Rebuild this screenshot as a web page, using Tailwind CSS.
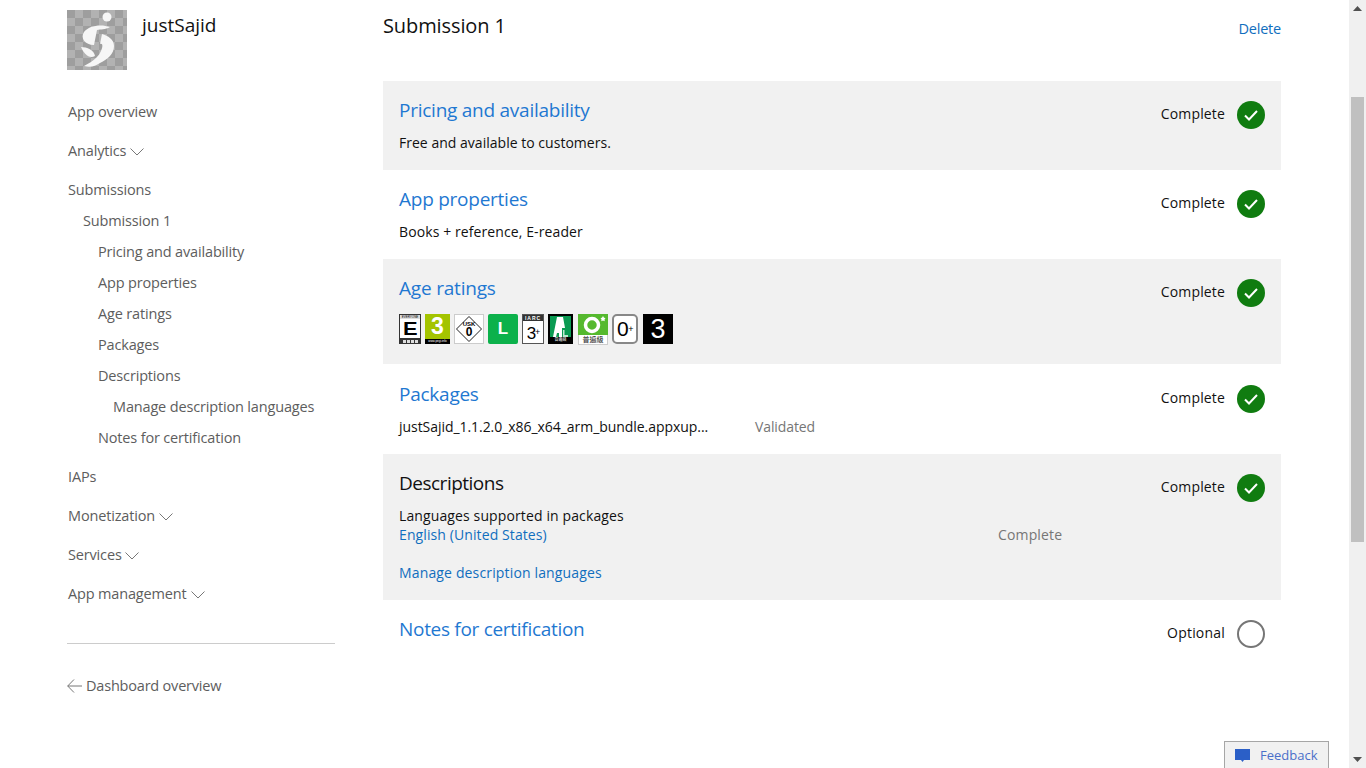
<!DOCTYPE html>
<html lang="en">
<head>
  <meta charset="UTF-8" />
  <title>Submission 1</title>
  <script src="https://cdn.jsdelivr.net/npm/@tailwindcss/browser@4"></script>
</head>
<body class="bg-white text-[#111] font-['Open_Sans',sans-serif] text-[14px] overflow-hidden">
<div class="relative h-[768px] w-[1366px] overflow-hidden">

  <div class="flex w-[1349px]">
    <!-- Sidebar -->
    <aside class="ml-[67px] w-[268px] shrink-0 text-[#5d5d5d]">
      <div class="flex h-[70px] mt-[10px]">
        <svg width="60" height="60" viewBox="0 0 60 60" class="shrink-0">
          <defs>
            <pattern id="chk" width="16" height="16" patternUnits="userSpaceOnUse">
              <rect width="16" height="16" fill="#b2b2b2"/>
              <rect width="8" height="8" fill="#9e9e9e"/>
              <rect x="8" y="8" width="8" height="8" fill="#9e9e9e"/>
            </pattern>
          </defs>
          <rect width="60" height="60" fill="url(#chk)"/>
          <circle cx="40" cy="7" r="4.5" fill="#f6f6f6"/>
          <path d="M43 17C35 14 22 15 17 22c-4 6 1 13 10 13l3-15c4-1 8 0 13-3z" fill="#f6f6f6"/>
          <path d="M35 24l-2 10c3-1 3 3 1 7-2 5-6 8-10 11l-7 4c7 2 11 0 16-3 8-4 14-9 14-17 0-7-6-10-12-12z" fill="#f6f6f6"/>
          <path d="M14 37c3 7 8 12 14 9-1-6-8-9-14-9z" fill="#f6f6f6"/>
        </svg>
        <div class="ml-[15px] text-[19px] leading-[30px] text-[#111]">justSajid</div>
      </div>

      <nav class="mt-[21px] pl-[1px] text-[14.5px] leading-[22px] tracking-[-0.16px]">
        <a class="block">App overview</a>
        <a class="flex items-center mt-[17px]">Analytics
          <svg width="14" height="8" viewBox="0 0 14 8" class="ml-[4px] mt-[2px]"><path d="M.5.5 7 7l6.5-6.5" fill="none" stroke="#777" /></svg>
        </a>
        <a class="block mt-[17px]">Submissions</a>
        <a class="block mt-[9px] ml-[15px]">Submission 1</a>
        <a class="block mt-[9px] ml-[30px]">Pricing and availability</a>
        <a class="block mt-[9px] ml-[30px]">App properties</a>
        <a class="block mt-[9px] ml-[30px]">Age ratings</a>
        <a class="block mt-[9px] ml-[30px]">Packages</a>
        <a class="block mt-[9px] ml-[30px]">Descriptions</a>
        <a class="block mt-[9px] ml-[45px]">Manage description languages</a>
        <a class="block mt-[9px] ml-[30px]">Notes for certification</a>
        <a class="block mt-[17px]">IAPs</a>
        <a class="flex items-center mt-[17px]">Monetization
          <svg width="14" height="8" viewBox="0 0 14 8" class="ml-[4px] mt-[2px]"><path d="M.5.5 7 7l6.5-6.5" fill="none" stroke="#777" /></svg>
        </a>
        <a class="flex items-center mt-[17px]">Services
          <svg width="14" height="8" viewBox="0 0 14 8" class="ml-[3px] mt-[2px]"><path d="M.5.5 7 7l6.5-6.5" fill="none" stroke="#777" /></svg>
        </a>
        <a class="flex items-center mt-[17px]">App management
          <svg width="14" height="8" viewBox="0 0 14 8" class="ml-[4px] mt-[2px]"><path d="M.5.5 7 7l6.5-6.5" fill="none" stroke="#777" /></svg>
        </a>
      </nav>

      <div class="mt-[38px] border-t border-[#ccc]"></div>
      <a class="flex items-center mt-[31px] leading-[22px] text-[14.5px] tracking-[-0.2px]">
        <svg width="15" height="14" viewBox="0 0 15 14" class="mr-[4px]"><path d="M7 .5.7 7 7 13.5M.7 7H15" fill="none" stroke="#777"/></svg>
        Dashboard overview
      </a>
    </aside>

    <!-- Main -->
    <main class="ml-[48px] w-[898px] shrink-0">
      <div class="flex justify-between h-[81px]">
        <h1 class="text-[20px] tracking-[-0.1px] leading-[30px] mt-[11px]">Submission 1</h1>
        <a class="text-[#106ebe] text-[14.5px] tracking-[-0.2px] leading-[22px] mt-[18px]">Delete</a>
      </div>

      <section class="bg-[#f1f1f1] h-[89px] px-4 flex justify-between">
        <div>
          <h2 class="text-[#1f78d1] text-[19px] tracking-[-0.25px] leading-[28px] mt-[15px]">Pricing and availability</h2>
          <p class="mt-[8px] leading-[22px] tracking-[0.02px]">Free and available to customers.</p>
        </div>
        <div class="flex items-start h-[28px] mt-[20px]">
          <span class="leading-[26px] tracking-[0.15px]">Complete</span>
          <svg width="28" height="28" viewBox="0 0 28 28" class="ml-3"><circle cx="14" cy="14" r="14" fill="#107c10"/><path d="M8 14.5l4 4 8-8.5" fill="none" stroke="#fff" stroke-width="2"/></svg>
        </div>
      </section>

      <section class="h-[89px] px-4 flex justify-between">
        <div>
          <h2 class="text-[#1f78d1] text-[19px] tracking-[-0.25px] leading-[28px] mt-[15px]">App properties</h2>
          <p class="mt-[8px] leading-[22px] tracking-[0.1px]">Books + reference, E-reader</p>
        </div>
        <div class="flex items-start h-[28px] mt-[20px]">
          <span class="leading-[26px] tracking-[0.15px]">Complete</span>
          <svg width="28" height="28" viewBox="0 0 28 28" class="ml-3"><circle cx="14" cy="14" r="14" fill="#107c10"/><path d="M8 14.5l4 4 8-8.5" fill="none" stroke="#fff" stroke-width="2"/></svg>
        </div>
      </section>

      <section class="bg-[#f1f1f1] h-[105px] px-4 flex justify-between">
        <div>
          <h2 class="text-[#1f78d1] text-[19px] tracking-[-0.2px] leading-[28px] mt-[15px]">Age ratings</h2>
          <div class="flex mt-[12px] gap-[4px] h-[30px] font-['Liberation_Sans',sans-serif]">
            <!-- ESRB -->
            <div class="w-[22px] h-[30px] bg-[#333] p-[1px] flex flex-col items-center">
              <div class="w-full h-[4px] bg-[#ddd] text-[3px] leading-[4px] text-black text-center">EVERYONE</div>
              <div class="w-full h-[19px] bg-white text-black font-black text-[19px] leading-[19px] text-center"><span class="inline-block scale-x-[1.15]">E</span></div>
              <div class="w-full flex justify-center gap-[1px] mt-[2px]"><span class="w-[3px] h-[3px] bg-[#ddd]"></span><span class="w-[3px] h-[3px] bg-[#ddd]"></span><span class="w-[3px] h-[3px] bg-[#ddd]"></span><span class="w-[3px] h-[3px] bg-[#ddd]"></span></div>
            </div>
            <!-- PEGI -->
            <div class="w-[25px] h-[30px] bg-black flex flex-col items-center"><div class="w-full h-[25px] bg-[#a4c400] text-white font-bold text-[23px] leading-[25px] text-center">3</div><div class="text-[3px] leading-[5px] text-white">www.pegi.info</div></div>
            <!-- USK -->
            <div class="w-[30px] h-[30px] bg-white border border-[#ccc] flex items-center justify-center relative">
              <svg width="28" height="28" viewBox="0 0 28 28" class="absolute"><path d="M14 1.5 26.500 14 14 26.500 1.500 14z" fill="#fff" stroke="#222"/></svg>
              <div class="relative text-center text-black font-bold"><div class="text-[6px] leading-[6px]">USK</div><div class="text-[12px] leading-[11px]">0</div></div>
            </div>
            <!-- GRAC -->
            <div class="w-[30px] h-[30px] bg-[#0cb14b] rounded-[2px] text-white font-bold text-[17px] leading-[30px] text-center">L</div>
            <!-- IARC -->
            <div class="w-[22px] h-[30px] border border-[#555] bg-white flex flex-col items-center">
              <div class="w-full h-[6px] bg-[#333] text-white font-bold text-[5px] leading-[6px] text-center tracking-[1px]">IARC</div>
              <div class="text-black text-[17px] leading-[22px] tracking-[-1px]">3<span class="text-[9px] align-[4px]">+</span></div>
            </div>
            <!-- ClassInd -->
            <div class="w-[25px] h-[30px] bg-black p-[2px] flex flex-col">
              <div class="h-[21px] bg-[#0a9a52] flex items-end justify-center"><svg width="17" height="21" viewBox="0 0 17 21"><path d="M1 21 5 1h6l2 11h-3v9H7v-4H5l-1 4z" fill="#fff"/><path d="M11 14h1.500v5H16v2h-5z" fill="#bfe8d0"/></svg></div>
              <div class="text-[4px] leading-[5px] text-white text-center font-['Noto_Sans_CJK_TC',sans-serif]">普遍級</div>
            </div>
            <!-- Taiwan -->
            <div class="ml-[1px] w-[30px] h-[30px] bg-white flex flex-col">
              <div class="h-[21px] bg-[#55b92e] flex items-center justify-center"><svg width="28" height="21" viewBox="0 0 28 21"><circle cx="13" cy="11" r="6.500" fill="none" stroke="#fff" stroke-width="3.500"/><path d="M24 2l1 1.800 1.500.2-1 1.500.2 1.800-1.700-.8-1.700.8.200-1.800-1-1.500 1.500-.2z" fill="#fff"/></svg></div>
              <div class="text-[7px] leading-[9px] text-[#222] text-center border border-t-0 border-[#ccc] font-['Noto_Sans_CJK_TC',sans-serif]">普遍級</div>
            </div>
            <!-- 0+ -->
            <div class="w-[26px] h-[30px] border-2 border-[#888] rounded-[5px] bg-white text-black text-[21px] leading-[26px] text-center tracking-[-0.5px]">0<span class="text-[9px] align-[4px]">+</span></div>
            <!-- 3 -->
            <div class="ml-[1px] w-[30px] h-[30px] bg-black text-white text-[27px] leading-[30px] text-center">3</div>
          </div>
        </div>
        <div class="flex items-start h-[28px] mt-[20px]">
          <span class="leading-[26px] tracking-[0.15px]">Complete</span>
          <svg width="28" height="28" viewBox="0 0 28 28" class="ml-3"><circle cx="14" cy="14" r="14" fill="#107c10"/><path d="M8 14.5l4 4 8-8.5" fill="none" stroke="#fff" stroke-width="2"/></svg>
        </div>
      </section>

      <section class="h-[90px] px-4 flex justify-between">
        <div>
          <h2 class="text-[#1f78d1] text-[19px] tracking-[-0.25px] leading-[28px] mt-[16px]">Packages</h2>
          <div class="flex mt-[8px] leading-[22px]">
            <span class="w-[356px] tracking-[-0.05px]">justSajid_1.1.2.0_x86_x64_arm_bundle.appxup...</span>
            <span class="text-[#767676] tracking-[-0.1px]">Validated</span>
          </div>
        </div>
        <div class="flex items-start h-[28px] mt-[21px]">
          <span class="leading-[26px] tracking-[0.15px]">Complete</span>
          <svg width="28" height="28" viewBox="0 0 28 28" class="ml-3"><circle cx="14" cy="14" r="14" fill="#107c10"/><path d="M8 14.5l4 4 8-8.5" fill="none" stroke="#fff" stroke-width="2"/></svg>
        </div>
      </section>

      <section class="bg-[#f1f1f1] h-[146px] px-4 flex justify-between">
        <div>
          <h2 class="text-[19px] tracking-[-0.5px] leading-[28px] mt-[15px]">Descriptions</h2>
          <p class="mt-[9px] leading-[19px] tracking-[0.12px]">Languages supported in packages</p>
          <div class="flex leading-[19px]">
            <a class="w-[599px] text-[#106ebe] tracking-[0.1px]">English (United States)</a>
            <span class="text-[#767676] tracking-[0.15px]">Complete</span>
          </div>
          <a class="block mt-[19px] leading-[19px] text-[#106ebe] tracking-[0.15px]">Manage description languages</a>
        </div>
        <div class="flex items-start h-[28px] mt-[20px]">
          <span class="leading-[26px] tracking-[0.15px]">Complete</span>
          <svg width="28" height="28" viewBox="0 0 28 28" class="ml-3"><circle cx="14" cy="14" r="14" fill="#107c10"/><path d="M8 14.5l4 4 8-8.5" fill="none" stroke="#fff" stroke-width="2"/></svg>
        </div>
      </section>

      <section class="h-[90px] px-4 flex justify-between">
        <h2 class="text-[#1f78d1] text-[19px] tracking-[-0.3px] leading-[28px] mt-[15px]">Notes for certification</h2>
        <div class="flex items-start h-[28px] mt-[20px]">
          <span class="leading-[26px] tracking-[0.2px]">Optional</span>
          <svg width="28" height="28" viewBox="0 0 28 28" class="ml-3"><circle cx="14" cy="14" r="13" fill="none" stroke="#767676" stroke-width="2"/></svg>
        </div>
      </section>
    </main>
  </div>

  <!-- Feedback tab -->
  <div class="absolute left-[1224px] top-[741px] w-[105px] h-[27px] border border-b-0 border-[#a6a6a6] bg-[#f1f1f1] flex items-center pl-[10px] pt-[1px] text-[#4a6fc9] text-[13px]">
    <svg width="15" height="15" viewBox="0 0 15 15" class="mr-[10px]"><path d="M0 1h15v11H9l-1.500 2L6 12H0z" fill="#2b5fc7"/></svg>
    Feedback
  </div>

  <!-- Scrollbar -->
  <div class="absolute right-0 top-0 w-[17px] h-[768px] bg-[#f0f0f0]">
    <svg width="17" height="17" viewBox="0 0 17 17"><path d="M8.5 6 13 11H4z" fill="#505050"/></svg>
    <div class="absolute left-[2px] top-[97px] w-[13px] h-[445px] bg-[#c0c0c0]"></div>
    <svg width="17" height="17" viewBox="0 0 17 17" class="absolute bottom-0"><path d="M8.5 11 13 6H4z" fill="#505050"/></svg>
  </div>
</div>
</body>
</html>
